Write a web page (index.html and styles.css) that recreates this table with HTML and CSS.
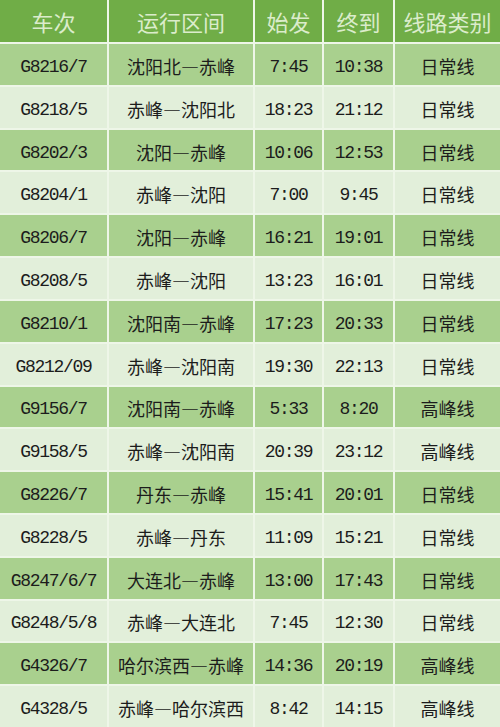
FILE: index.html
```
<!DOCTYPE html>
<html lang="zh">
<head>
<meta charset="utf-8">
<link rel="stylesheet" href="styles.css">
</head>
<body>
<div class="table">
  <div class="row head"><div>车次</div><div>运行区间</div><div>始发</div><div>终到</div><div>线路类别</div></div>
  <div class="row odd"><div class="m">G8216/7</div><div>沈阳北—赤峰</div><div class="m">7:45</div><div class="m">10:38</div><div>日常线</div></div>
  <div class="row even"><div class="m">G8218/5</div><div>赤峰—沈阳北</div><div class="m">18:23</div><div class="m">21:12</div><div>日常线</div></div>
  <div class="row odd"><div class="m">G8202/3</div><div>沈阳—赤峰</div><div class="m">10:06</div><div class="m">12:53</div><div>日常线</div></div>
  <div class="row even"><div class="m">G8204/1</div><div>赤峰—沈阳</div><div class="m">7:00</div><div class="m">9:45</div><div>日常线</div></div>
  <div class="row odd"><div class="m">G8206/7</div><div>沈阳—赤峰</div><div class="m">16:21</div><div class="m">19:01</div><div>日常线</div></div>
  <div class="row even"><div class="m">G8208/5</div><div>赤峰—沈阳</div><div class="m">13:23</div><div class="m">16:01</div><div>日常线</div></div>
  <div class="row odd"><div class="m">G8210/1</div><div>沈阳南—赤峰</div><div class="m">17:23</div><div class="m">20:33</div><div>日常线</div></div>
  <div class="row even"><div class="m">G8212/09</div><div>赤峰—沈阳南</div><div class="m">19:30</div><div class="m">22:13</div><div>日常线</div></div>
  <div class="row odd"><div class="m">G9156/7</div><div>沈阳南—赤峰</div><div class="m">5:33</div><div class="m">8:20</div><div>高峰线</div></div>
  <div class="row even"><div class="m">G9158/5</div><div>赤峰—沈阳南</div><div class="m">20:39</div><div class="m">23:12</div><div>高峰线</div></div>
  <div class="row odd"><div class="m">G8226/7</div><div>丹东—赤峰</div><div class="m">15:41</div><div class="m">20:01</div><div>日常线</div></div>
  <div class="row even"><div class="m">G8228/5</div><div>赤峰—丹东</div><div class="m">11:09</div><div class="m">15:21</div><div>日常线</div></div>
  <div class="row odd"><div class="m">G8247/6/7</div><div>大连北—赤峰</div><div class="m">13:00</div><div class="m">17:43</div><div>日常线</div></div>
  <div class="row even"><div class="m">G8248/5/8</div><div>赤峰—大连北</div><div class="m">7:45</div><div class="m">12:30</div><div>日常线</div></div>
  <div class="row odd"><div class="m">G4326/7</div><div>哈尔滨西—赤峰</div><div class="m">14:36</div><div class="m">20:19</div><div>高峰线</div></div>
  <div class="row even"><div class="m">G4328/5</div><div>赤峰—哈尔滨西</div><div class="m">8:42</div><div class="m">14:15</div><div>高峰线</div></div>
</div>
</body>
</html>
```
FILE: styles.css
```
html, body {
  margin: 0;
  padding: 0;
  background: #eef5e9;
}
.table {
  width: 500px;
  height: 727px;
  display: flex;
  flex-direction: column;
  gap: 2px;
  background: #eef6e8;
  font-family: "Noto Sans CJK SC", "Noto Sans", sans-serif;
  color: #1c1c1c;
}
.row {
  flex: 1;
  display: grid;
  grid-template-columns: 107px 144px 67px 69px 105px;
  column-gap: 2px;
}
.head {
  flex: 0 0 42px;
}
.row > div {
  display: flex;
  align-items: center;
  justify-content: center;
  font-size: 18px;
  white-space: nowrap;
  padding-top: 3px;
}
.row > div.m {
  font-family: "Liberation Mono", "DejaVu Sans Mono", monospace;
  font-size: 18px;
  letter-spacing: -1.3px;
  padding-top: 5px;
}
.head > div {
  background: #70ad47;
  color: #dbeccb;
  font-size: 22px;
  padding-top: 0;
}
.odd > div {
  background: #a9d08e;
}
.even > div {
  background: #e2efda;
}
```
